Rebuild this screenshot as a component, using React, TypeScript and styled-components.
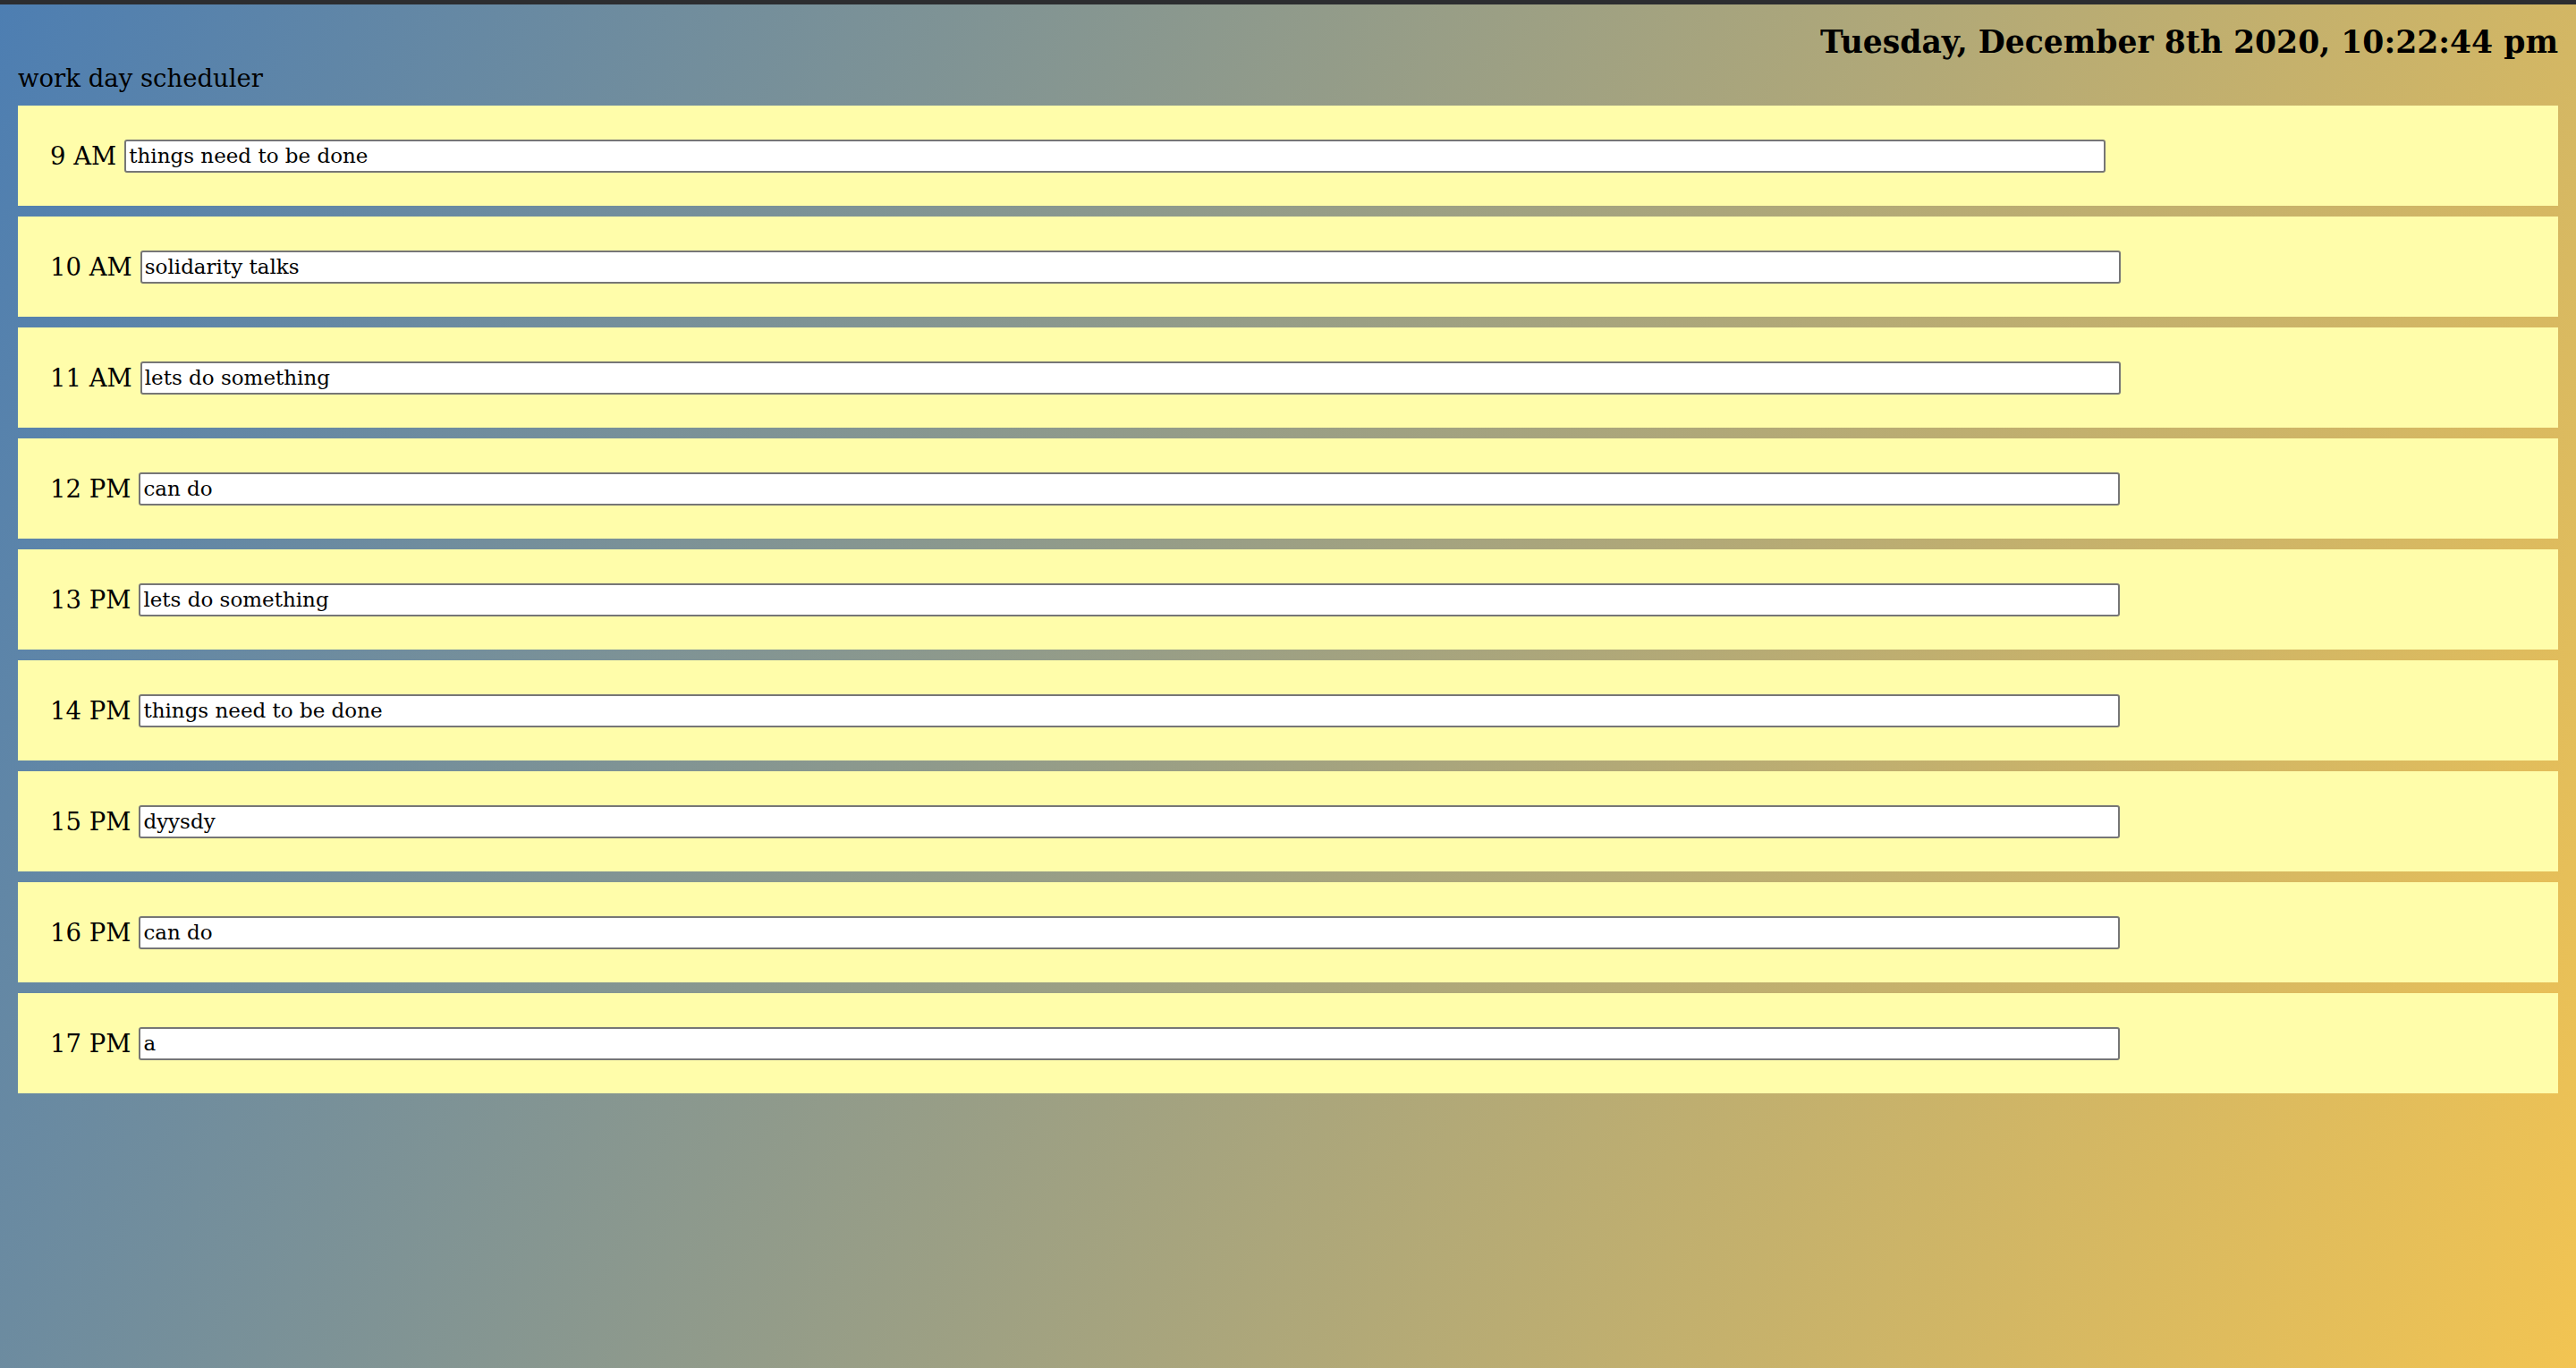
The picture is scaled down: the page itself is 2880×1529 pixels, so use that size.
import React from "react";
import styled, { createGlobalStyle } from "styled-components";

const GlobalStyle = createGlobalStyle`
  html, body {
    margin: 0;
    padding: 0;
  }
  body {
    min-height: 100vh;
    background: linear-gradient(114deg, #4d7eb2 0%, #f2c452 100%);
    background-attachment: fixed;
    font-family: "DejaVu Serif", "Liberation Serif", serif;
    color: #000;
  }
`;

const Page = styled.div`
  box-sizing: border-box;
  min-height: 100vh;
  border-top: 5px solid #2c2d30;
  padding: 0 20px 40px;
  display: flex;
  flex-direction: column;
`;

const Header = styled.header`
  display: flex;
  flex-direction: column;
  padding-top: 22px;
`;

const DateLine = styled.p`
  margin: 0;
  text-align: right;
  font-size: 34.6px;
  line-height: 40px;
  font-weight: 700;
`;

const Title = styled.h1`
  margin: 4px 0 0;
  font-size: 27.5px;
  line-height: 32px;
  font-weight: 400;
`;

const Schedule = styled.main`
  margin-top: 15px;
  display: flex;
  flex-direction: column;
  gap: 12px;
`;

const Row = styled.div`
  box-sizing: border-box;
  height: 112px;
  padding: 0 36px;
  background: #fffdaa;
  display: flex;
  align-items: center;
  gap: 9px;
`;

const Hour = styled.label`
  flex: none;
  font-size: 27.5px;
  white-space: nowrap;
`;

const TaskInput = styled.input`
  flex: none;
  box-sizing: border-box;
  width: 80%;
  height: 37px;
  margin: 0;
  padding: 1px 3px;
  border: 2px solid #767676;
  border-radius: 3px;
  background: #fff;
  font-family: "DejaVu Serif", "Liberation Serif", serif;
  font-size: 23px;
  color: #000;
  outline: none;
`;

const slots = [
  { hour: "9 AM", task: "things need to be done" },
  { hour: "10 AM", task: "solidarity talks" },
  { hour: "11 AM", task: "lets do something" },
  { hour: "12 PM", task: "can do" },
  { hour: "13 PM", task: "lets do something" },
  { hour: "14 PM", task: "things need to be done" },
  { hour: "15 PM", task: "dyysdy" },
  { hour: "16 PM", task: "can do" },
  { hour: "17 PM", task: "a" },
];

export default function App() {
  return (
    <>
      <GlobalStyle />
      <Page>
        <Header>
          <DateLine>Tuesday, December 8th 2020, 10:22:44 pm</DateLine>
          <Title>work day scheduler</Title>
        </Header>
        <Schedule>
          {slots.map((s, i) => (
            <Row key={i}>
              <Hour htmlFor={`slot-${i}`}>{s.hour}</Hour>
              <TaskInput id={`slot-${i}`} type="text" defaultValue={s.task} />
            </Row>
          ))}
        </Schedule>
      </Page>
    </>
  );
}
